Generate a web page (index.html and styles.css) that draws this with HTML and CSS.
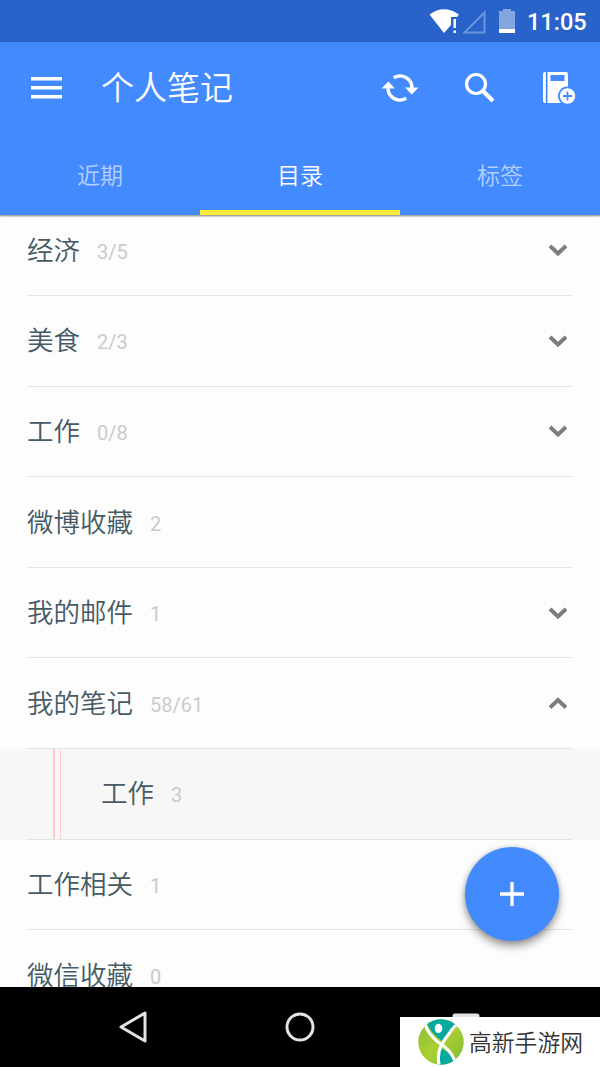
FILE: index.html
```html
<!DOCTYPE html>
<html lang="zh-CN">
<head>
<meta charset="utf-8">
<title>个人笔记</title>
<link rel="stylesheet" href="styles.css">
</head>
<body>
<div class="phone">
  <div class="status">
    <svg class="status-icons" width="92" height="30" viewBox="0 0 92 30">
      <path fill="#fff" d="M1.500 5.500Q16-5 31 5.500L29 8H23V16L16 24Z"/>
      <path fill="#fff" d="M25.500 10h2.500v9h-2.500zM25.500 21.500h2.500v2.500h-2.500z"/>
      <path fill="none" stroke="#6b94db" stroke-width="2" d="M36.500 23.500H56.500V3.500Z"/>
      <path fill="#85a5e0" d="M71 2h16v22H71zM75 0h8v3h-8z"/>
      <path fill="#fff" d="M71 20h16v4H71z"/>
    </svg>
    <span class="clock">11:05</span>
  </div>
  <header class="header">
    <div class="toolbar">
      <svg class="menu" width="32" height="24" viewBox="0 0 32 24"><path fill="#fff" d="M0 1h31v3.500H0zM0 10h31v3.500H0zM0 19h31v3.500H0z"/></svg>
      <h1 class="title">个人笔记</h1>
      <svg class="sync" width="38" height="32" viewBox="0 0 38 32">
        <path fill="none" stroke="#fff" stroke-width="3.400" d="M12.800 5.700A12 12 0 0 1 31 16M25.200 26.300A12 12 0 0 1 7 16"/>
        <path fill="#fff" d="M24 15.500h13.500l-6.700 7zM.500 16.500h13.500l-6.700-7z"/>
      </svg>
      <svg class="search" width="32" height="32" viewBox="0 0 32 32"><circle cx="12" cy="12" r="9.500" fill="none" stroke="#fff" stroke-width="3.200"/><path d="M18.500 18.500L29 29" stroke="#fff" stroke-width="4.200"/></svg>
      <svg class="book" width="34" height="34" viewBox="0 0 34 34">
        <path fill="#fff" d="M3 1h.8v31H3Q1 32 1 30V3Q1 1 3 1zM5.500 1H24Q26 1 26 3V15.600A9.300 9.300 0 0 0 17 29Q17.500 30.500 19 32H5.500z"/>
        <path fill="#448aff" d="M8.500 4h14v6h-14z"/>
        <circle cx="25.500" cy="25" r="7.700" fill="#fff"/>
        <path stroke="#448aff" stroke-width="1.800" d="M21 25h9M25.500 20.500v9"/>
      </svg>
    </div>
    <nav class="tabs"><span class="tab">近期</span><span class="tab active">目录</span><span class="tab">标签</span></nav>
  </header>
  <main class="list">
    <div class="row"><span class="name">经济</span><span class="count">3/5</span><svg class="chev" viewBox="0 0 18 14"><path d="M1 2L9 9.500L17 2"/></svg></div>
    <div class="row"><span class="name">美食</span><span class="count">2/3</span><svg class="chev" viewBox="0 0 18 14"><path d="M1 2L9 9.500L17 2"/></svg></div>
    <div class="row"><span class="name">工作</span><span class="count">0/8</span><svg class="chev" viewBox="0 0 18 14"><path d="M1 2L9 9.500L17 2"/></svg></div>
    <div class="row"><span class="name">微博收藏</span><span class="count">2</span></div>
    <div class="row"><span class="name">我的邮件</span><span class="count">1</span><svg class="chev" viewBox="0 0 18 14"><path d="M1 2L9 9.500L17 2"/></svg></div>
    <div class="row"><span class="name">我的笔记</span><span class="count">58/61</span><svg class="chev" viewBox="0 0 18 14"><path d="M1 10.500L9 3L17 10.500"/></svg></div>
    <div class="child"><div class="row"><span class="margin-lines"></span><span class="name">工作</span><span class="count">3</span></div></div>
    <div class="row"><span class="name">工作相关</span><span class="count">1</span></div>
    <div class="row"><span class="name">微信收藏</span><span class="count">0</span></div>
  </main>
  <footer class="navbar">
    <svg class="nav-icon" width="30" height="34" viewBox="0 0 30 34"><path d="M3 17L27 3V31Z"/></svg>
    <svg class="nav-icon" width="30" height="30" viewBox="0 0 30 30"><circle cx="15" cy="15" r="13"/></svg>
    <svg class="nav-icon" width="28" height="28" viewBox="0 0 28 28"><rect x="2" y="2" width="24" height="24" rx="1" fill="#e4e2e4"/></svg>
  </footer>
  <button class="fab" aria-label="新建"><svg width="24" height="24" viewBox="0 0 24 24"><path stroke="#fff" stroke-width="3.300" d="M0 12h24M12 0v24"/></svg></button>
  <div class="brand">
    <svg width="46" height="46" viewBox="0 0 46 46">
      <defs>
        <linearGradient id="leaf" x1="0" y1="0" x2="1" y2="1"><stop offset="0" stop-color="#86bf35"/><stop offset=".5" stop-color="#aacf32"/><stop offset="1" stop-color="#7fb935"/></linearGradient>
        <clipPath id="disc"><circle cx="23" cy="23" r="22.700"/></clipPath>
      </defs>
      <g clip-path="url(#disc)">
        <path fill="url(#leaf)" d="M0 0H46V46H0z"/>
        <path fill="#06a99e" d="M8 0H40L37 7Q31 15 24 22Q14 15 9 5z"/>
        <path fill="#06a99e" d="M23 29Q31 33 36 41V46H20Q20 36 23 29z"/>
        <path fill="none" stroke="#fff" stroke-width="3.200" d="M7 5Q10 15 20 23Q33 31 37 42M41 4Q36 7 31.500 14Q26 21 23 27Q19 35 21 46"/>
        <ellipse cx="20.500" cy="9.500" rx="3.800" ry="4.700" fill="#fff"/>
      </g>
    </svg>
    <span class="brand-name">高新手游网</span>
  </div>
</div>
</body>
</html>
```
FILE: styles.css
```css
* { box-sizing: border-box; }
body { margin: 0; font-family: Roboto, "Noto Sans CJK SC", sans-serif; }
.phone { position: relative; width: 600px; height: 1067px; overflow: hidden; display: flex; flex-direction: column; background: #fdfdfd; }
.status { height: 41.500px; flex: none; background: #2962c9; display: flex; justify-content: flex-end; padding: 9px 14px 0 0; color: #fff; }
.status-icons { margin-right: 7px; }
.clock { width: 59px; font-size: 23.500px; font-weight: 500; line-height: 27px; white-space: nowrap; }
.header { position: relative; z-index: 1; height: 173.500px; flex: none; background: #448aff; box-shadow: 0 1px 2px rgba(0,0,0,.5); color: #fff; display: flex; flex-direction: column; }
.toolbar { height: 93.500px; display: flex; align-items: center; padding: 0 24px 0 31px; }
.title { margin: 0 auto 0 38px; padding-top: 2px; font-size: 33px; line-height: 48px; font-weight: 350; }
.sync { margin-right: 45px; }
.search { margin-right: 46px; }
.tabs { height: 80px; display: grid; grid-template-columns: repeat(3, 1fr); }
.tab { display: flex; align-items: center; justify-content: center; font-size: 23px; font-weight: 350; color: #b4d0ff; padding-top: 3px; border-bottom: 5px solid transparent; }
.active { color: #fff; border-color: #ffeb3b; }
.list { flex: 1; min-height: 0; overflow: hidden; display: flex; flex-direction: column; margin-top: -9.500px; }
.row { height: 90.600px; flex: none; margin: 0 28px 0 27px; border-bottom: 1px solid #dfe6e7; display: flex; align-items: center; }
.name { font-size: 26.500px; line-height: 40px; font-weight: 350; padding-top: 1px; color: #455a64; }
.count { font-size: 20px; color: #cbcbcb; margin: 3px 0 0 17px; }
.chev { width: 18px; height: 14px; margin: 2px 5px 0 auto; fill: none; stroke: #7d7d7d; stroke-width: 4; }
.child { flex: none; background: #f7f7f7; }
.margin-lines { width: 8px; align-self: stretch; margin: 0 40px 0 26px; border: solid #ffcdc9; border-width: 0 1px 0 2px; }
.navbar { height: 80px; flex: none; background: #000; display: flex; align-items: center; justify-content: space-between; padding: 0 120px 0 118px; }
.nav-icon { fill: none; stroke: #e4e2e4; stroke-width: 3; stroke-linejoin: round; }
.fab { position: absolute; left: 464.500px; top: 846.500px; width: 94px; height: 94px; padding: 0; border: 0; border-radius: 50%; background: #448aff; box-shadow: 0 5px 9px rgba(0,0,0,.4), 0 0 4px rgba(0,0,0,.15); display: grid; place-items: center; }
.brand { position: absolute; right: 0; bottom: 0; width: 200px; height: 50px; background: #fff; display: flex; align-items: center; padding-left: 18px; gap: 5px; }
.brand-name { font-family: "Noto Sans CJK SC", sans-serif; font-size: 22.800px; font-weight: 350; line-height: 34px; color: #333; white-space: nowrap; }
```
